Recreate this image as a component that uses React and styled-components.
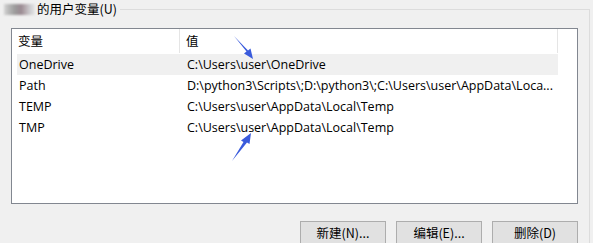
import React from "react";
import styled, { createGlobalStyle } from "styled-components";

const Global = createGlobalStyle`
  html, body { margin: 0; padding: 0; background: #f0f0f0; }
  body {
    font-family: "Open Sans", "Noto Sans CJK SC", sans-serif;
    font-size: 12px;
    color: #000;
  }
`;

const Page = styled.div`
  position: relative;
  width: 593px;
  height: 243px;
  overflow: hidden;
  background: #f0f0f0;
`;

const Group = styled.div`
  position: relative;
  margin-top: 9px;
  width: 590px;
  height: 240px;
  border-top: 1px solid #dcdcdc;
  border-right: 1px solid #dcdcdc;
  box-sizing: border-box;
  padding: 18px 0 0 11px;
`;

const Legend = styled.div`
  position: absolute;
  top: -10px;
  left: 0;
  height: 18px;
  display: flex;
  align-items: center;
  gap: 2px;
  padding-right: 3px;
  background: #f0f0f0;
  font-family: "Noto Sans CJK SC", sans-serif;
  font-size: 12.5px;
  line-height: 18px;
`;

const Blur = styled.span`
  display: inline-block;
  width: 31px;
  height: 11px;
  margin-left: 4px;
  background: linear-gradient(
    90deg,
    #d4d4d4 0%,
    #b4b4b4 18%,
    #9c9c9c 35%,
    #9a8a92 55%,
    #b8aeb3 70%,
    #cfcfd2 85%,
    #e6e6e6 100%
  );
  filter: blur(1px);
`;

const List = styled.div`
  width: 567px;
  height: 176px;
  box-sizing: border-box;
  border: 1px solid #828790;
  background: #fff;
`;

const Header = styled.div`
  display: grid;
  grid-template-columns: 168px 378px;
  height: 24px;
`;

const HeadCell = styled.div`
  padding-left: 6px;
  border-right: 1px solid #e5e5e5;
  font-family: "Noto Sans CJK SC", sans-serif;
  font-size: 12.5px;
  line-height: 24px;
  white-space: nowrap;
`;

const Rows = styled.div`
  padding: 1px 0 0 5px;
`;

const Row = styled.div`
  display: grid;
  grid-template-columns: 163px 378px;
  width: 541px;
  height: 21px;
  background: ${(p) => (p.$sel ? "#f0f0f0" : "transparent")};
`;

const Cell = styled.div`
  padding-left: ${(p) => (p.$first ? "2px" : "7px")};
  font-size: 12.5px;
  line-height: 21px;
  white-space: nowrap;
`;

const Buttons = styled.div`
  display: flex;
  justify-content: flex-end;
  gap: 10px;
  width: 567px;
  margin-top: 17px;
`;

const Button = styled.button`
  width: 86px;
  height: 23px;
  box-sizing: border-box;
  border: 1px solid #adadad;
  background: #e1e1e1;
  font-family: "Noto Sans CJK SC", sans-serif;
  font-size: 12.5px;
  color: #000;
  padding: 0;
`;

const Arrow = styled.svg`
  position: absolute;
  left: 0;
  top: 0;
  pointer-events: none;
`;

const rows = [
  ["OneDrive", "C:\\Users\\user\\OneDrive", true],
  ["Path", "D:\\python3\\Scripts\\;D:\\python3\\;C:\\Users\\user\\AppData\\Loca...", false],
  ["TEMP", "C:\\Users\\user\\AppData\\Local\\Temp", false],
  ["TMP", "C:\\Users\\user\\AppData\\Local\\Temp", false],
];

export default function App() {
  return (
    <Page>
      <Global />
      <Group>
        <Legend>
          <Blur />
          <span>的用户变量(U)</span>
        </Legend>
        <List>
          <Header>
            <HeadCell>变量</HeadCell>
            <HeadCell>值</HeadCell>
          </Header>
          <Rows>
            {rows.map(([k, v, sel]) => (
              <Row key={k} $sel={sel}>
                <Cell $first>{k}</Cell>
                <Cell>{v}</Cell>
              </Row>
            ))}
          </Rows>
        </List>
        <Buttons>
          <Button>新建(N)...</Button>
          <Button>编辑(E)...</Button>
          <Button>删除(D)</Button>
        </Buttons>
      </Group>
      <Arrow width="593" height="243" viewBox="0 0 593 243">
        <path d="M234 36 L246.5 51.5 L244 53.5 L253 59 L250.5 48.5 L248 50.5 Z" fill="#3a5bdc" />
        <path d="M232 161 L243.5 142 L241 140.5 L251 133 L249.5 144 L247 142.5 Z" fill="#3a5bdc" />
      </Arrow>
    </Page>
  );
}
